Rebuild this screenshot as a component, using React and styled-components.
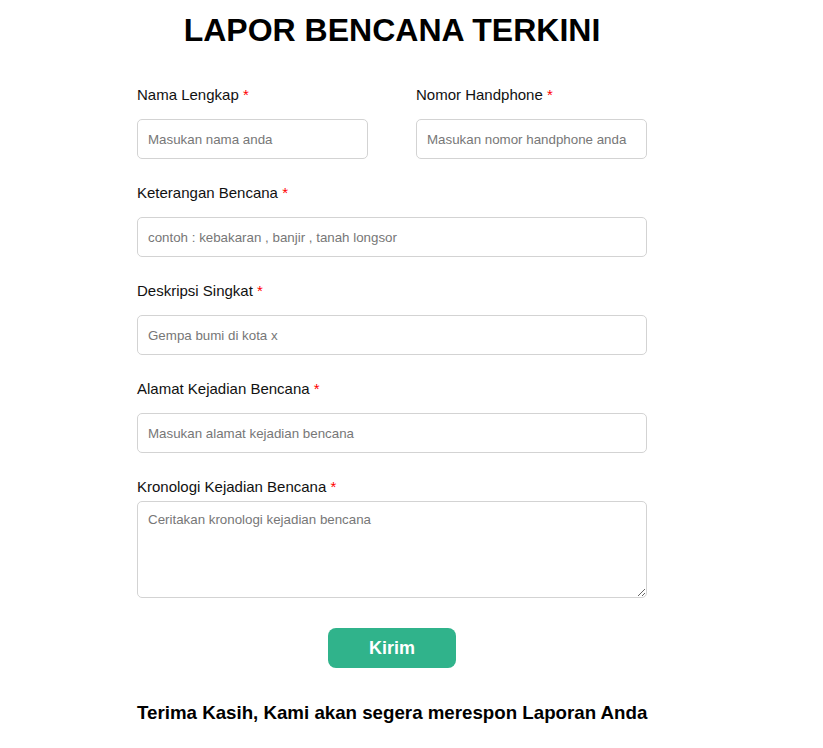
import React from 'react'
import styled, { createGlobalStyle } from 'styled-components'

const GlobalStyle = createGlobalStyle`
  body {
    margin: 0;
    background: #fff;
    font-family: "Liberation Sans", Arial, sans-serif;
  }
`

const Page = styled.div`
  padding: 12px 0 0 137px;
  width: 510px;
`

const Title = styled.h1`
  margin: 0 0 37px;
  font-size: 32px;
  line-height: 37px;
  font-weight: bold;
  text-align: center;
  color: #000;
`

const Form = styled.form`
  display: flex;
  flex-direction: column;
  gap: 25px;
`

const Row = styled.div`
  display: grid;
  grid-template-columns: 1fr 1fr;
  column-gap: 48px;
`

const Field = styled.div`
  display: flex;
  flex-direction: column;
`

const Label = styled.label`
  font-size: 15px;
  line-height: 18px;
  color: #111;
  margin-bottom: ${p => (p.$tight ? '5px' : '15px')};
`

const Star = styled.span`
  color: #f00;
`

const Input = styled.input`
  box-sizing: border-box;
  width: 100%;
  height: 40px;
  padding: 0 10px;
  border: 1px solid #d3d3d3;
  border-radius: 5px;
  font-family: "Liberation Sans", Arial, sans-serif;
  font-size: 13.33px;
  outline: none;
  &::placeholder {
    color: #777;
  }
`

const TextArea = styled.textarea`
  box-sizing: border-box;
  width: 100%;
  height: 97px;
  padding: 10px 10px;
  border: 1px solid #d3d3d3;
  border-radius: 5px;
  font-family: "Liberation Sans", Arial, sans-serif;
  font-size: 13.33px;
  outline: none;
  &::placeholder {
    color: #777;
  }
`

const Actions = styled.div`
  display: flex;
  justify-content: center;
  margin-top: 5px;
`

const Button = styled.button`
  width: 128px;
  height: 40px;
  border: 0;
  border-radius: 8px;
  background: #30b38b;
  color: #fff;
  font-family: "Liberation Sans", Arial, sans-serif;
  font-size: 18px;
  font-weight: bold;
  cursor: pointer;
`

const Thanks = styled.h3`
  margin: 34px 0 0;
  font-size: 18.72px;
  line-height: 22px;
  font-weight: bold;
  text-align: center;
  white-space: nowrap;
  color: #000;
`

const Req = ({ children, tight }) => (
  <Label $tight={tight}>
    {children} <Star>*</Star>
  </Label>
)

const App = () => {
  return (
    <>
      <GlobalStyle />
      <Page>
        <Title>LAPOR BENCANA TERKINI</Title>
        <Form onSubmit={e => e.preventDefault()}>
          <Row>
            <Field>
              <Req>Nama Lengkap</Req>
              <Input placeholder="Masukan nama anda" />
            </Field>
            <Field>
              <Req>Nomor Handphone</Req>
              <Input placeholder="Masukan nomor handphone anda" />
            </Field>
          </Row>
          <Field>
            <Req>Keterangan Bencana</Req>
            <Input placeholder="contoh : kebakaran , banjir , tanah longsor" />
          </Field>
          <Field>
            <Req>Deskripsi Singkat</Req>
            <Input placeholder="Gempa bumi di kota x" />
          </Field>
          <Field>
            <Req>Alamat Kejadian Bencana</Req>
            <Input placeholder="Masukan alamat kejadian bencana" />
          </Field>
          <Field>
            <Req tight>Kronologi Kejadian Bencana</Req>
            <TextArea placeholder="Ceritakan kronologi kejadian bencana" />
          </Field>
          <Actions>
            <Button type="submit">Kirim</Button>
          </Actions>
        </Form>
        <Thanks>Terima Kasih, Kami akan segera merespon Laporan Anda</Thanks>
      </Page>
    </>
  )
}

export default App
